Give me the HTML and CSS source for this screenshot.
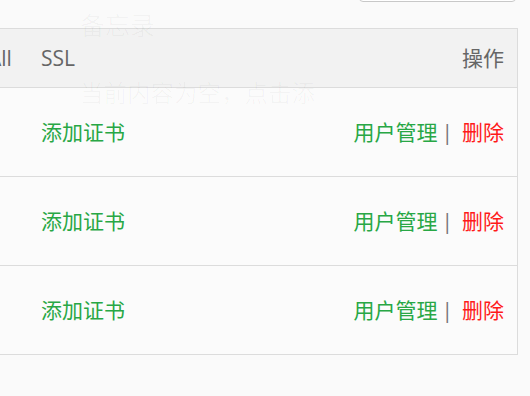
FILE: index.html
```html
<!DOCTYPE html>
<html lang="zh-CN">
<head>
<meta charset="utf-8">
<title>SSL</title>
<link rel="stylesheet" href="styles.css">
</head>
<body>
<div class="page">
  <div class="toolbar">
    <div class="search"></div>
  </div>
  <table class="grid">
    <thead>
      <tr>
        <th class="col-all">All</th>
        <th class="col-ssl">SSL</th>
        <th class="col-op">操作</th>
      </tr>
    </thead>
    <tbody>
      <tr>
        <td class="col-all"></td>
        <td class="col-ssl"><a class="link-green">添加证书</a></td>
        <td class="col-op"><span class="ops"><a class="link-green">用户管理</a><span class="sep">|</span><a class="link-red">删除</a></span></td>
      </tr>
      <tr>
        <td class="col-all"></td>
        <td class="col-ssl"><a class="link-green">添加证书</a></td>
        <td class="col-op"><span class="ops"><a class="link-green">用户管理</a><span class="sep">|</span><a class="link-red">删除</a></span></td>
      </tr>
      <tr>
        <td class="col-all"></td>
        <td class="col-ssl"><a class="link-green">添加证书</a></td>
        <td class="col-op"><span class="ops"><a class="link-green">用户管理</a><span class="sep">|</span><a class="link-red">删除</a></span></td>
      </tr>
    </tbody>
  </table>
</div>
<div class="ghost">
  <div class="ghost-title">备忘录</div>
  <div class="ghost-text">当前内容为空，点击添</div>
</div>
</body>
</html>
```

FILE: styles.css
```css
html, body {
  margin: 0;
  padding: 0;
  background: #fafafa;
  font-family: "Open Sans", "Noto Sans CJK SC", sans-serif;
  overflow: hidden;
}

.page {
  position: relative;
  padding-right: 12px;
}

.toolbar {
  display: flex;
  justify-content: flex-end;
  height: 28px;
  padding-right: 2px;
}

.search {
  width: 157px;
  height: 32px;
  margin-top: -30px;
  box-sizing: border-box;
  border: 1px solid #c8c8c8;
  border-radius: 4px;
  background: #fff;
}

.grid {
  border-collapse: collapse;
  margin-left: -25px;
  width: calc(100% + 25px);
  font-size: 21px;
  border: 1px solid #dcdcdc;
  border-left: none;
}

.grid th {
  background: #f2f2f2;
  color: #666;
  font-weight: normal;
  height: 58px;
  padding: 0 11px;
  text-align: left;
  line-height: 1;
  border-bottom: 1px solid #dcdcdc;
}

.grid td {
  height: 88px;
  padding: 0 11px;
  border-bottom: 1px solid #dcdcdc;
  line-height: 1;
  background: #fbfbfb;
}

.grid .col-all {
  width: 31px;
  padding-left: 13px;
}

.grid .col-op {
  text-align: right;
  padding-right: 13px;
}

.ops {
  display: inline-flex;
  align-items: center;
}

.link-green {
  color: #28a745;
  text-decoration: none;
}

.link-red {
  color: #ff1a1a;
  text-decoration: none;
}

.sep {
  color: #777;
  margin: 0 9px 0 4px;
}

.ghost {
  position: absolute;
  left: 80px;
  top: 8px;
  font-family: "Noto Sans CJK SC", sans-serif;
  color: rgba(0, 0, 0, 0.03);
  pointer-events: none;
}

.ghost-title {
  font-size: 25px;
  line-height: 32px;
}

.ghost-text {
  font-size: 23.5px;
  line-height: 32px;
  margin-top: 36px;
}
```
